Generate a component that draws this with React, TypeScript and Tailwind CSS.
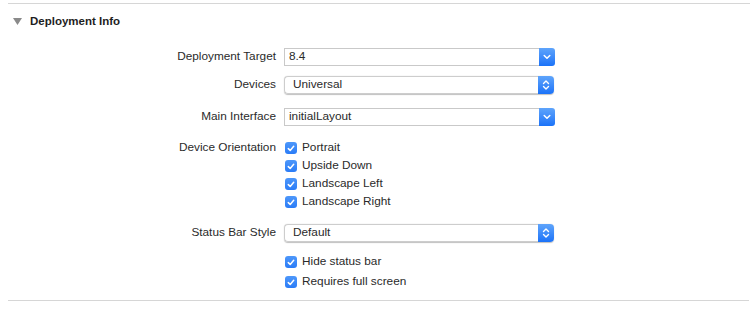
import React from "react";

const font = { fontFamily: '"Liberation Sans", Arial, sans-serif' };

function ChevronDown() {
  return (
    <svg width="8" height="6" viewBox="0 0 8 6" fill="none">
      <path d="M1.2 1.5 L4 4.3 L6.8 1.5" stroke="white" strokeWidth="1.5" strokeLinecap="round" strokeLinejoin="round" />
    </svg>
  );
}

function ChevronUpDown() {
  return (
    <svg width="8" height="12" viewBox="0 0 8 12" fill="none">
      <path d="M1.5 4.5 L4 2 L6.5 4.5" stroke="white" strokeWidth="1.4" strokeLinecap="round" strokeLinejoin="round" />
      <path d="M1.5 7.5 L4 10 L6.5 7.5" stroke="white" strokeWidth="1.4" strokeLinecap="round" strokeLinejoin="round" />
    </svg>
  );
}

function Combo({ value }: { value: string }) {
  return (
    <div className="flex h-[18px] w-[271px] items-stretch">
      <div className="flex flex-1 items-center border border-r-0 border-[#c9c9c9] bg-white pl-[4px] text-[#2a2a2a]">{value}</div>
      <div className="flex w-[16px] items-center justify-center rounded-r-[3px] bg-gradient-to-b from-[#5ea4fb] to-[#1a72f8]">
        <ChevronDown />
      </div>
    </div>
  );
}

function Popup({ value }: { value: string }) {
  return (
    <div className="flex h-[18px] w-[270px] items-stretch rounded-[4px] shadow-[0_0.5px_1px_rgba(0,0,0,0.25)]">
      <div className="flex flex-1 items-center rounded-l-[4px] border border-r-0 border-[#cdcdcd] bg-white pl-[8px] text-[#2a2a2a]">{value}</div>
      <div className="flex w-[16px] items-center justify-center rounded-r-[4px] bg-gradient-to-b from-[#5ea4fb] to-[#1a72f8]">
        <ChevronUpDown />
      </div>
    </div>
  );
}

function Check({ label }: { label: string }) {
  return (
    <div className="flex h-[18px] items-center">
      <div className="ml-[1px] flex h-[12px] w-[12px] items-center justify-center rounded-[3px] bg-gradient-to-b from-[#4d97fa] to-[#2a7cf7]">
        <svg width="8" height="7" viewBox="0 0 8 7" fill="none">
          <path d="M1.3 3.6 L3.2 5.4 L6.7 1.3" stroke="white" strokeWidth="1.5" strokeLinecap="round" strokeLinejoin="round" />
        </svg>
      </div>
      <span className="ml-[5px] text-[#2a2a2a]">{label}</span>
    </div>
  );
}

function Row({ label, children, className }: { label?: string; children: React.ReactNode; className?: string }) {
  return (
    <div className={"flex items-start " + (className ?? "")}>
      <div className="flex h-[18px] w-[276px] items-center justify-end text-[#2a2a2a]">{label}</div>
      <div className="ml-[8px]">{children}</div>
    </div>
  );
}

export default function App() {
  return (
    <div className="h-[310px] w-[750px] overflow-hidden bg-white text-[11.8px]" style={font}>
      <div className="pt-[3px] pl-[8px]">
        <div className="h-px bg-[#d6d6d6]" />
      </div>
      <div className="flex h-[35px] items-center pl-[13px]">
        <svg width="9" height="7" viewBox="0 0 9 7">
          <path d="M0 0 H9 L4.5 7 Z" fill="#8a8a8a" />
        </svg>
        <span className="ml-[8px] text-[11.5px] font-bold text-[#1e1e1e]">Deployment Info</span>
      </div>

      <Row label="Deployment Target" className="mt-[9px]">
        <Combo value="8.4" />
      </Row>
      <Row label="Devices" className="mt-[10px]">
        <Popup value="Universal" />
      </Row>
      <Row label="Main Interface" className="mt-[14px]">
        <Combo value="initialLayout" />
      </Row>
      <Row label="Device Orientation" className="mt-[13px]">
        <div className="flex flex-col">
          <Check label="Portrait" />
          <Check label="Upside Down" />
          <Check label="Landscape Left" />
          <Check label="Landscape Right" />
        </div>
      </Row>
      <Row label="Status Bar Style" className="mt-[13px]">
        <Popup value="Default" />
      </Row>
      <Row className="mt-[11px]">
        <div className="flex flex-col gap-[2px]">
          <Check label="Hide status bar" />
          <Check label="Requires full screen" />
        </div>
      </Row>
      <div className="mt-[9px] pl-[8px] pr-px">
        <div className="h-px bg-[#d6d6d6]" />
      </div>
    </div>
  );
}
